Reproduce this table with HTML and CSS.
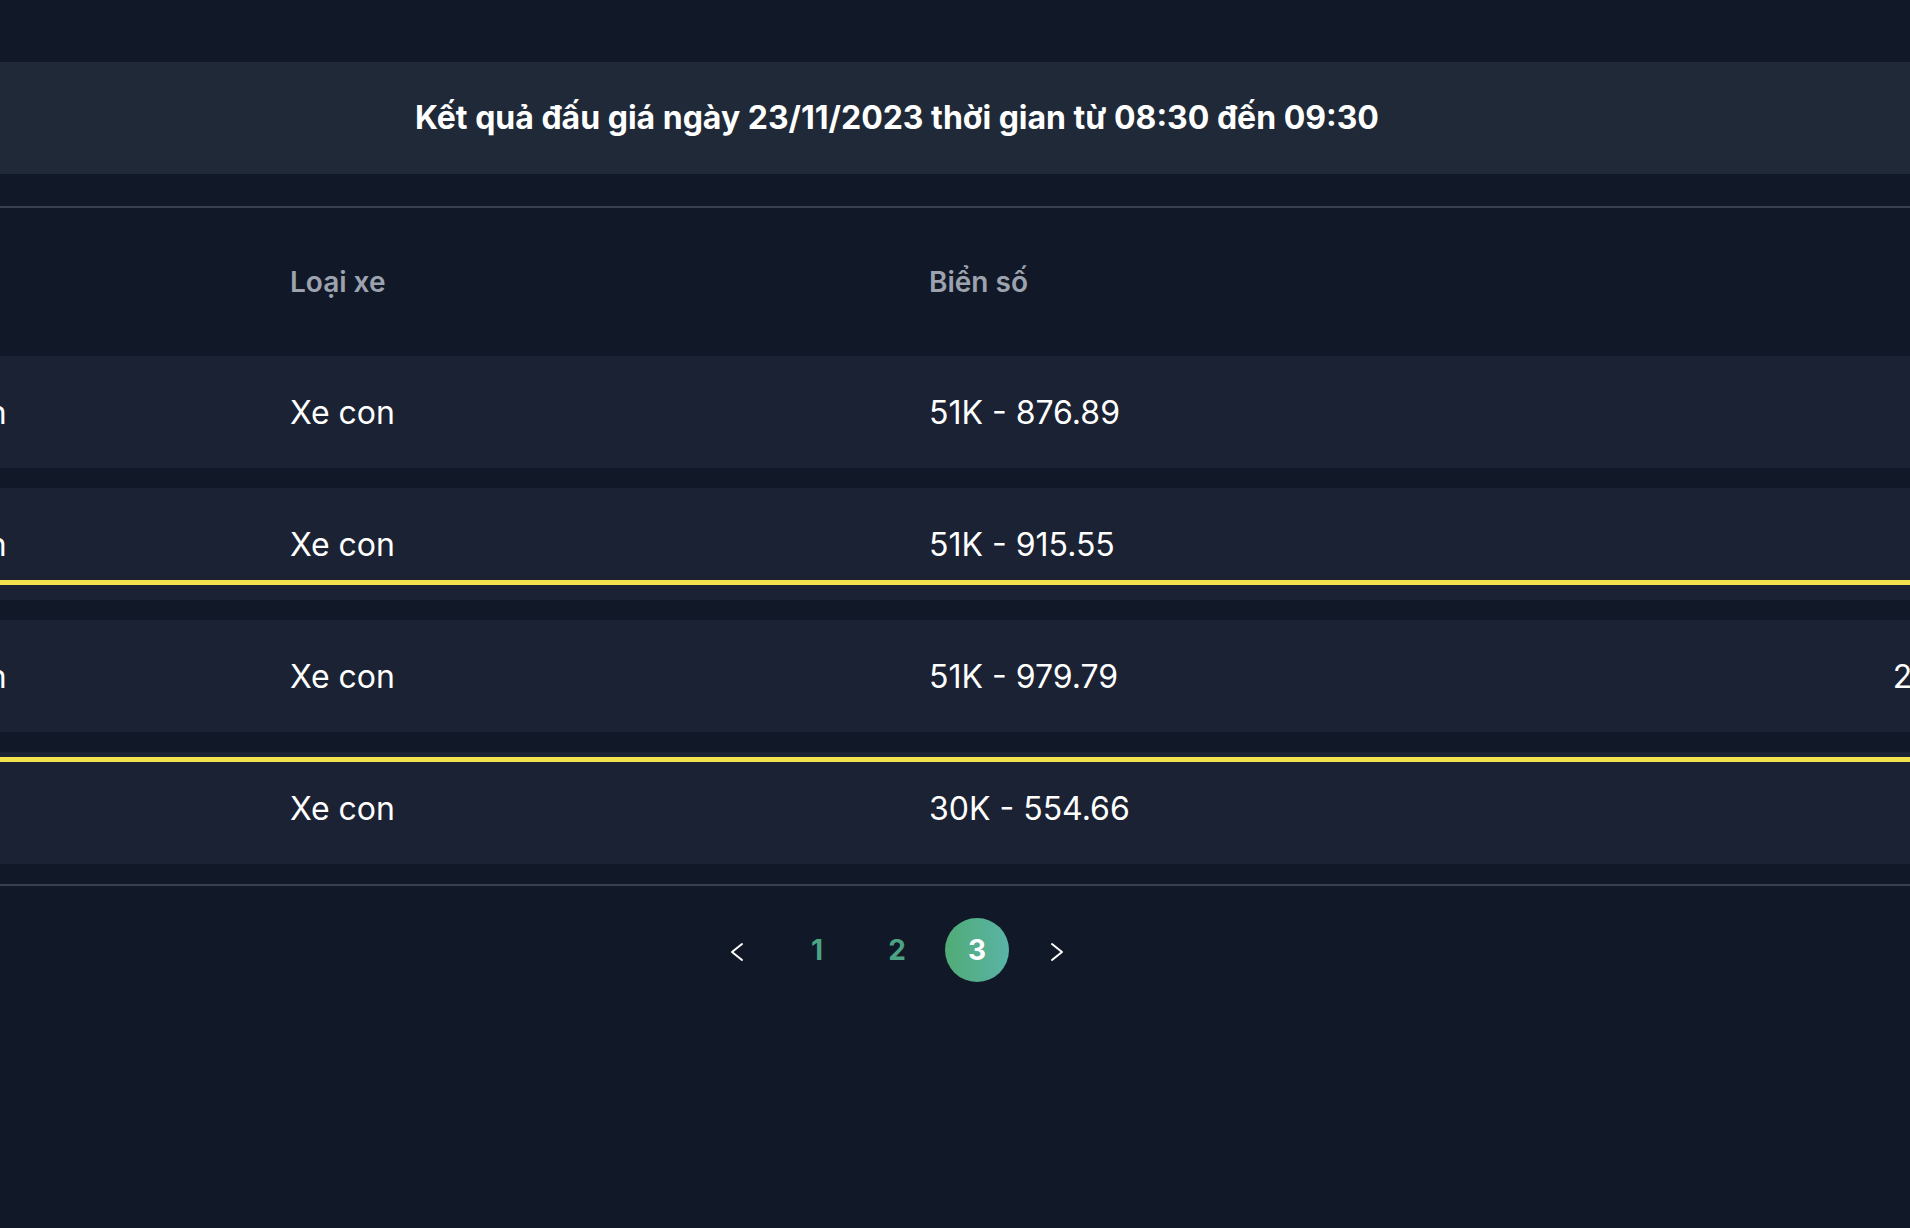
FILE: index.html
```html
<!DOCTYPE html>
<html lang="vi">
<head>
<meta charset="utf-8">
<title>Kết quả đấu giá</title>
<link rel="stylesheet" href="styles.css">
</head>
<body>
<div class="page">
  <div class="title-band">
    <h1 class="title">Kết quả đấu giá ngày 23/11/2023 thời gian từ 08:30 đến 09:30</h1>
  </div>

  <div class="table">
    <div class="row head">
      <div class="cell first">Tỉnh, Thành phố</div>
      <div class="cell">Loại xe</div>
      <div class="cell">Biển số</div>
      <div class="cell right">Giá trúng</div>
    </div>
    <div class="row">
      <div class="cell first">Thành phố Hồ Chí Minh</div>
      <div class="cell">Xe con</div>
      <div class="cell">51K - 876.89</div>
      <div class="cell right">515.000.000</div>
    </div>
    <div class="row mark-bottom">
      <div class="cell first">Thành phố Hồ Chí Minh</div>
      <div class="cell">Xe con</div>
      <div class="cell">51K - 915.55</div>
      <div class="cell right">340.000.000</div>
    </div>
    <div class="row">
      <div class="cell first">Thành phố Hồ Chí Minh</div>
      <div class="cell">Xe con</div>
      <div class="cell">51K - 979.79</div>
      <div class="cell right">2.140.000.000</div>
    </div>
    <div class="row mark-top">
      <div class="cell first">Hà Nội</div>
      <div class="cell">Xe con</div>
      <div class="cell">30K - 554.66</div>
      <div class="cell right">445.000.000</div>
    </div>
  </div>

  <nav class="pager">
    <a class="pg arrow" href="#" aria-label="Trang trước">
      <svg width="16" height="20" viewBox="0 0 16 20"><path d="M13 2 L3 10 L13 18" fill="none" stroke="#ffffff" stroke-width="2" stroke-linecap="round" stroke-linejoin="round"/></svg>
    </a>
    <a class="pg num" href="#">1</a>
    <a class="pg num" href="#">2</a>
    <a class="pg num active" href="#">3</a>
    <a class="pg arrow" href="#" aria-label="Trang sau">
      <svg width="16" height="20" viewBox="0 0 16 20"><path d="M3 2 L13 10 L3 18" fill="none" stroke="#ffffff" stroke-width="2" stroke-linecap="round" stroke-linejoin="round"/></svg>
    </a>
  </nav>
</div>
</body>
</html>
```

FILE: styles.css
```css
html, body {
  margin: 0;
  padding: 0;
  background: #111827;
  overflow: hidden;
  height: 100%;
}

body {
  font-family: Inter, "Noto Sans", "Liberation Sans", sans-serif;
  color: #ffffff;
}

.page {
  width: 2494px;
  margin-left: -350px;
  padding-top: 62px;
  --cols: 616px 639px 639px 600px;
}

.title-band {
  background: #1f2937;
  padding: 32px 0;
  text-align: center;
}

.title {
  margin: 0;
  font-size: 32px;
  line-height: 48px;
  font-weight: 700;
  color: #ffffff;
}

.table {
  margin-top: 32px;
  border-top: 2px solid #374151;
  border-bottom: 2px solid #374151;
  padding: 20px 0;
  display: flex;
  flex-direction: column;
  gap: 20px;
}

.row {
  position: relative;
  display: grid;
  grid-template-columns: var(--cols);
  align-items: center;
  height: 112px;
  background: #1a2233;
  font-size: 32px;
  white-space: nowrap;
}

.row.head {
  height: 108px;
  background: transparent;
  font-size: 28px;
  font-weight: 600;
  color: #9ca3af;
}

.cell {
  padding: 0 24px;
}

.cell.first {
  padding-left: 0;
}

.cell.right {
  text-align: right;
  padding-right: 35px;
}

.row.mark-bottom::after,
.row.mark-top::before {
  content: "";
  position: absolute;
  left: 0;
  right: 0;
  height: 5px;
  background: #f1e24e;
}

.row.mark-bottom::after {
  bottom: 15px;
}

.row.mark-top::before {
  top: 5px;
}

.pager {
  margin-top: 32px;
  display: flex;
  justify-content: center;
  gap: 16px;
}

.pg {
  width: 64px;
  height: 64px;
  border-radius: 50%;
  display: flex;
  align-items: center;
  justify-content: center;
  text-decoration: none;
  font-size: 28px;
  font-weight: 700;
}

.pg.num {
  color: #4ba384;
}

.pg.active {
  color: #ffffff;
  background: linear-gradient(90deg, #50ab76, #5ab4a6);
}

.pg.arrow svg {
  display: block;
  margin-top: 4px;
}
```
